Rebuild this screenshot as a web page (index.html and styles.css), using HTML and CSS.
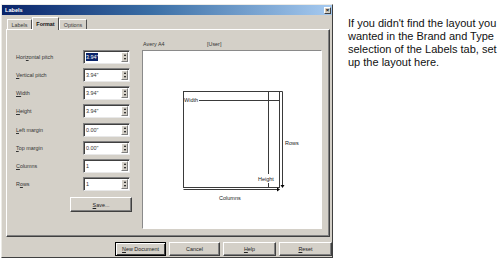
FILE: index.html
```html
<!DOCTYPE html>
<html lang="en">
<head>
<meta charset="utf-8">
<title>Labels</title>
<link rel="stylesheet" href="styles.css">
</head>
<body>
<div class="page">
  <div class="dialog">
    <div class="titlebar">
      <span class="title">Labels</span>
      <span class="close">&#215;</span>
    </div>
    <div class="tabs">
      <span class="tab t1">Labels</span>
      <span class="tab t2 active">Format</span>
      <span class="tab t3">Options</span>
    </div>
    <div class="panel">
      <div class="form">
        <div class="row"><span class="lbl">Hori<u>z</u>ontal pitch</span><div class="spin"><span class="val"><span class="sel">3.94"</span></span><span class="arrows"><i class="up"></i><i class="down"></i></span></div></div>
        <div class="row"><span class="lbl"><u>V</u>ertical pitch</span><div class="spin"><span class="val">3.94"</span><span class="arrows"><i class="up"></i><i class="down"></i></span></div></div>
        <div class="row"><span class="lbl"><u>W</u>idth</span><div class="spin"><span class="val">3.94"</span><span class="arrows"><i class="up"></i><i class="down"></i></span></div></div>
        <div class="row"><span class="lbl"><u>H</u>eight</span><div class="spin"><span class="val">3.94"</span><span class="arrows"><i class="up"></i><i class="down"></i></span></div></div>
        <div class="row"><span class="lbl"><u>L</u>eft margin</span><div class="spin"><span class="val">0.00"</span><span class="arrows"><i class="up"></i><i class="down"></i></span></div></div>
        <div class="row"><span class="lbl"><u>T</u>op margin</span><div class="spin"><span class="val">0.00"</span><span class="arrows"><i class="up"></i><i class="down"></i></span></div></div>
        <div class="row"><span class="lbl"><u>C</u>olumns</span><div class="spin"><span class="val">1</span><span class="arrows"><i class="up"></i><i class="down"></i></span></div></div>
        <div class="row"><span class="lbl">R<u>o</u>ws</span><div class="spin"><span class="val">1</span><span class="arrows"><i class="up"></i><i class="down"></i></span></div></div>
        <div class="btn save"><u>S</u>ave...</div>
      </div>
      <div class="preview">
        <div class="phead"><span class="brand">Avery A4</span><span>[User]</span></div>
        <div class="canvas">
          <svg class="diagram" viewBox="0 0 178 177" width="178" height="177">
            <g stroke="#3a3a3a" stroke-width="1" fill="none">
              <rect x="40.5" y="40.5" width="96" height="96"/>
              <line x1="136.5" y1="40.5" x2="139.5" y2="40.5"/>
              <line x1="56" y1="49.5" x2="136.5" y2="49.5"/>
              <line x1="125.5" y1="40.5" x2="125.5" y2="123"/>
              <line x1="125.5" y1="132" x2="125.5" y2="136.5"/>
              <line x1="139.5" y1="40.5" x2="139.5" y2="134"/>
              <line x1="40.5" y1="138.5" x2="134" y2="138.5"/>
            </g>
            <path d="M137.5 134 L141.5 134 L139.5 137 Z" fill="#000"/>
            <path d="M134 136.5 L134 140.5 L137 138.5 Z" fill="#000"/>
            <text x="41" y="51.3" class="dt">Width</text>
            <text x="115" y="130" class="dt">Height</text>
            <text x="142" y="93.5" class="dt">Rows</text>
            <text x="76" y="148.5" class="dt">Columns</text>
          </svg>
        </div>
      </div>
    </div>
    <div class="buttons">
      <div class="btn def w51"><u>N</u>ew Document</div>
      <div class="btn w51">Cancel</div>
      <div class="btn w53"><u>H</u>elp</div>
      <div class="btn w53"><u>R</u>eset</div>
    </div>
  </div>
  <p class="note">If you didn't find the layout you<br>wanted in the Brand and Type<br>selection of the Labels tab, set<br>up the layout here.</p>
</div>
</body>
</html>
```
FILE: styles.css
```css
* { box-sizing: border-box; }
html, body { margin: 0; padding: 0; background: #fff; }
body { font-family: "Liberation Sans", Arial, sans-serif; }

.page { display: flex; align-items: flex-start; }

.dialog {
  margin: 4px 0 0 1px;
  width: 332px;
  height: 254px;
  background: #d4d0c8;
  border: 1px solid;
  border-color: #ecebe6 #404040 #404040 #ecebe6;
  display: flex;
  flex-direction: column;
  font-size: 5.4px;
  color: #1e1e1e;
}

.titlebar {
  height: 10px;
  display: flex;
  align-items: center;
  justify-content: space-between;
  padding: 0 1px 0 3px;
  background: linear-gradient(to right, #0a246a 0%, #3a6ea5 45%, #a6caf0 100%);
}
.title { color: #fff; font-weight: bold; font-size: 5.6px; }
.close {
  width: 7px; height: 7px;
  background: #d4d0c8;
  border: 1px solid;
  border-color: #fff #404040 #404040 #fff;
  display: flex; align-items: center; justify-content: center;
  font-size: 6px; line-height: 1; color: #000; font-weight: bold;
}

.tabs {
  display: flex;
  align-items: flex-end;
  height: 12px;
  margin: 2px 0 0 5px;
}
.tab {
  height: 10px;
  display: flex; align-items: center; justify-content: center;
  border: 1px solid;
  border-bottom: none;
  border-color: #fff #505050 transparent #fff;
  color: #3a3a3a;
}
.t1 { width: 25px; }
.t2 { width: 27px; }
.t3 { width: 28px; }
.tab.active {
  position: relative;
  z-index: 1;
  height: 13px;
  margin-bottom: -1px;
  font-weight: bold;
  color: #111;
  background: #d4d0c8;
}

.panel {
  margin: 0 2px 0 4px;
  height: 208px;
  border: 1px solid;
  border-color: #fff #404040 #404040 #fff;
  box-shadow: inset -1px -1px #808080;
  display: flex;
  padding-left: 9px;
}

.form {
  width: 114px;
  padding-top: 20px;
  display: flex;
  flex-direction: column;
  gap: 4.15px;
}
.row { display: flex; align-items: center; height: 14px; }
.lbl { width: 67px; color: #333; }
.spin {
  width: 47px; height: 14px;
  display: flex; align-items: center;
  background: #fff;
  border: 1px solid;
  border-color: #808080 #e8e8e8 #e8e8e8 #808080;
  box-shadow: inset 1px 1px #404040;
  padding: 0 1px 0 2px;
}
.val { flex: 1; color: #333; }
.sel { background: #0a246a; color: #fff; padding: 1px 0; }
.arrows {
  width: 7px; height: 10px;
  background: #d4d0c8;
  border: 1px solid;
  border-color: #fff #808080 #808080 #fff;
  display: flex; flex-direction: column;
  justify-content: space-around; align-items: center;
}
.arrows i { display: block; width: 0; height: 0; border-left: 1.5px solid transparent; border-right: 1.5px solid transparent; }
.arrows .up { border-bottom: 2px solid #000; }
.arrows .down { border-top: 2px solid #000; }

.btn {
  height: 14px;
  display: flex; align-items: center; justify-content: center;
  background: #d4d0c8;
  border: 1px solid;
  border-color: #fff #404040 #404040 #fff;
  box-shadow: inset -1px -1px #808080;
  color: #222;
}
.save { align-self: flex-start; margin: 2px 0 0 54px; width: 62px; height: 15px; }

.preview {
  width: 180px;
  margin-left: 12px;
  padding-top: 9px;
  display: flex;
  flex-direction: column;
}
.phead { height: 9px; margin-bottom: 2px; display: flex; align-items: center; padding-left: 1px; color: #333; }
.brand { width: 64px; }
.canvas {
  width: 180px; height: 179px;
  background: #fff;
  border: 1px solid;
  border-color: #8a8a8a #fff #fff #8a8a8a;
}
.diagram { display: block; }
.dt { font-family: "Liberation Sans", Arial, sans-serif; font-size: 5.5px; fill: #222; }

.buttons {
  display: flex;
  justify-content: flex-end;
  gap: 3px;
  margin-top: 5px;
  padding-right: 0;
}
.w51 { width: 51px; }
.w53 { width: 53px; }
.btn.def { border-color: #000; box-shadow: inset 1px 1px #fff, inset -1px -1px #404040; }

.note {
  margin: 17px 0 0 15px;
  font-family: "Liberation Sans", Arial, sans-serif;
  font-size: 11px;
  line-height: 13px;
  color: #111;
}
```
